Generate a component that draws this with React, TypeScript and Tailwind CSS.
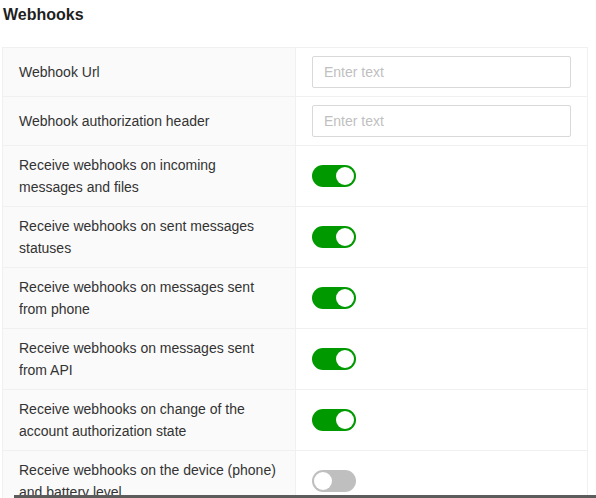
const rows: { label: string; kind: 'input' | 'on' | 'off' }[] = [
  { label: 'Webhook Url', kind: 'input' },
  { label: 'Webhook authorization header', kind: 'input' },
  { label: 'Receive webhooks on incoming messages and files', kind: 'on' },
  { label: 'Receive webhooks on sent messages statuses', kind: 'on' },
  { label: 'Receive webhooks on messages sent from phone', kind: 'on' },
  { label: 'Receive webhooks on messages sent from API', kind: 'on' },
  { label: 'Receive webhooks on change of the account authorization state', kind: 'on' },
  { label: 'Receive webhooks on the device (phone) and battery level', kind: 'off' },
]

function Toggle({ on }: { on: boolean }) {
  return (
    <button
      type="button"
      className={`relative h-[22px] w-[44px] rounded-full ${on ? 'bg-[#009900]' : 'bg-[#bfbfbf]'}`}
    >
      <span
        className={`absolute top-[2px] h-[18px] w-[18px] rounded-full bg-white ${on ? 'right-[2px]' : 'left-[2px]'}`}
      ></span>
    </button>
  )
}

export default function App() {
  return (
    <div className="relative min-h-screen bg-white font-['Liberation_Sans',Arial,sans-serif] text-[14px] text-[#333333]">
      <div className="pl-[2px] pr-[8px] pt-[4px]">
        <h2 className="mb-[21px] pl-[1px] text-[16px] font-bold leading-[22px] text-[#1f1f1f]">Webhooks</h2>

        <div className="border border-[#f0f0f0]">
          {rows.map((row, i) => (
            <div key={i} className={`flex ${i > 0 ? 'border-t border-[#f0f0f0]' : ''}`}>
              <div className="flex w-[293px] items-center border-r border-[#f0f0f0] bg-[#fafafa] py-[8px] pl-[16px] pr-[12px] leading-[22px]">
                {row.kind === 'input' ? <span className="py-[5px]">{row.label}</span> : row.label}
              </div>
              <div className="flex flex-1 items-center py-[8px] pl-[16px] pr-[16px]">
                {row.kind === 'input' ? (
                  <input
                    placeholder="Enter text"
                    className="h-[32px] w-full rounded-[2px] border border-[#d9d9d9] px-[11px] text-[14px] text-[#333333] outline-none placeholder:text-[#bfbfbf]"
                  />
                ) : (
                  <Toggle on={row.kind === 'on'} />
                )}
              </div>
            </div>
          ))}
        </div>
      </div>

      <div className="fixed bottom-0 left-[14px] right-0 h-[3px] bg-[#5c5c5c]"></div>
    </div>
  )
}
